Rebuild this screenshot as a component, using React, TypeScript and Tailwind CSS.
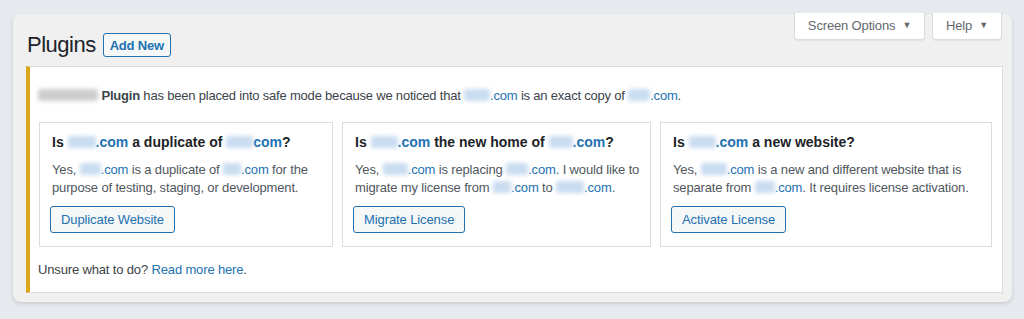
import React from "react";

const Blur = ({ w, gray }: { w: number; gray?: boolean }) => (
  <span
    className={
      "inline-block h-[12px] align-[-1px] rounded-[2px] blur-[2px] " +
      (gray ? "bg-[#cdcdd0]" : "bg-[#c9dcf0]")
    }
    style={{ width: w }}
  />
);

const L = ({ children }: { children: React.ReactNode }) => (
  <span className="text-[#2271b1]">{children}</span>
);

const Btn = ({ children }: { children: React.ReactNode }) => (
  <button className="h-[27px] px-[10px] -ml-[2px] rounded-[3px] border border-[#2271b1] bg-[#f6f7f7] text-[13px] text-[#2271b1] tracking-[-0.1px] leading-none">
    {children}
  </button>
);

const Card = ({
  w,
  title,
  body,
  btn,
}: {
  w: number;
  title: React.ReactNode;
  body: React.ReactNode;
  btn: string;
}) => (
  <div
    className="border border-[#dcdcde] bg-white pt-[9px] pb-[13px] pl-[12px] pr-[8px] flex flex-col"
    style={{ width: w }}
  >
    <div className="text-[14px] font-bold leading-[20px] text-[#1d2327]">{title}</div>
    <div className="mt-[9px] text-[13px] leading-[18px] text-[#50575e] tracking-[-0.15px]">{body}</div>
    <div className="mt-[9px]">
      <Btn>{btn}</Btn>
    </div>
  </div>
);

export default function App() {
  return (
    <div
      className="w-[1024px] h-[319px] bg-[#e6e9ee] pt-[14px] pl-[13px] overflow-hidden"
      style={{ fontFamily: '"Liberation Sans", Arial, sans-serif' }}
    >
      <div className="w-[999px] h-[288px] bg-[#f0f0f1] rounded-[8px] shadow-[0_2px_4px_rgba(0,0,0,0.12)]">
        <div className="flex justify-between items-start h-[52px]">
          <div className="flex items-center pl-[14px] pt-[19px] gap-[7px]">
            <h1 className="text-[22px] leading-[24px] text-[#1d2327] tracking-[-0.5px]">Plugins</h1>
            <button className="h-[24px] px-[6px] rounded-[3px] border border-[#2271b1] bg-[#f6f7f7] text-[13px] font-bold text-[#2271b1] leading-none tracking-[-0.2px]">
              Add New
            </button>
          </div>
          <div className="flex gap-[7px] pr-[10px] -mt-px">
            <div className="h-[27px] w-[131px] bg-white border border-[#dcdcde] border-t-0 rounded-b-[4px] shadow-[0_1px_1px_rgba(0,0,0,0.06)] flex items-center justify-center gap-[7px] text-[13px] text-[#646970] tracking-[-0.15px]">
              Screen Options <span className="text-[9px]">▼</span>
            </div>
            <div className="h-[27px] w-[70px] bg-white border border-[#dcdcde] border-t-0 rounded-b-[4px] shadow-[0_1px_1px_rgba(0,0,0,0.06)] flex items-center justify-center gap-[7px] text-[13px] text-[#646970] tracking-[-0.15px]">
              Help <span className="text-[9px]">▼</span>
            </div>
          </div>
        </div>
        <div className="ml-[13px] w-[977px] bg-white border border-[#dcdcde] border-l-[4px] border-l-[#dba617] pl-[8px] pt-[20px] pb-[13px]">
          <div className="text-[13px] leading-[18px] text-[#3c434a] tracking-[-0.2px]">
            <Blur w={60} gray /> <b>Plugin</b> has been placed into safe mode because we noticed that{" "}
            <Blur w={26} />
            <L>.com</L> is an exact copy of <Blur w={22} />
            <L>.com</L>.
          </div>
          <div className="mt-[17px] flex gap-[9px] pl-px">
            <Card
              w={294}
              title={
                <>
                  Is <Blur w={28} />
                  <L>.com</L> a duplicate of <Blur w={27} />
                  <L>com</L>?
                </>
              }
              body={
                <>
                  Yes, <Blur w={21} />
                  <L>.com</L> is a duplicate of <Blur w={18} />
                  <L>.com</L> for the purpose of testing, staging, or development.
                </>
              }
              btn="Duplicate Website"
            />
            <Card
              w={309}
              title={
                <>
                  Is <Blur w={27} />
                  <L>.com</L> the new home of <Blur w={24} />
                  <L>.com</L>?
                </>
              }
              body={
                <>
                  Yes, <Blur w={25} />
                  <L>.com</L> is replacing <Blur w={22} />
                  <L>.com</L>. I would like to migrate my license from <Blur w={18} />
                  <L>.com</L> to <Blur w={28} />
                  <L>.com</L>.
                </>
              }
              btn="Migrate License"
            />
            <Card
              w={332}
              title={
                <>
                  Is <Blur w={27} />
                  <L>.com</L> a new website?
                </>
              }
              body={
                <>
                  Yes, <Blur w={26} />
                  <L>.com</L> is a new and different website that is separate from <Blur w={20} />
                  <L>.com</L>. It requires license activation.
                </>
              }
              btn="Activate License"
            />
          </div>
          <div className="mt-[14px] text-[13px] leading-[18px] text-[#3c434a] tracking-[-0.15px]">
            Unsure what to do? <L>Read more here</L>.
          </div>
        </div>
      </div>
    </div>
  );
}
